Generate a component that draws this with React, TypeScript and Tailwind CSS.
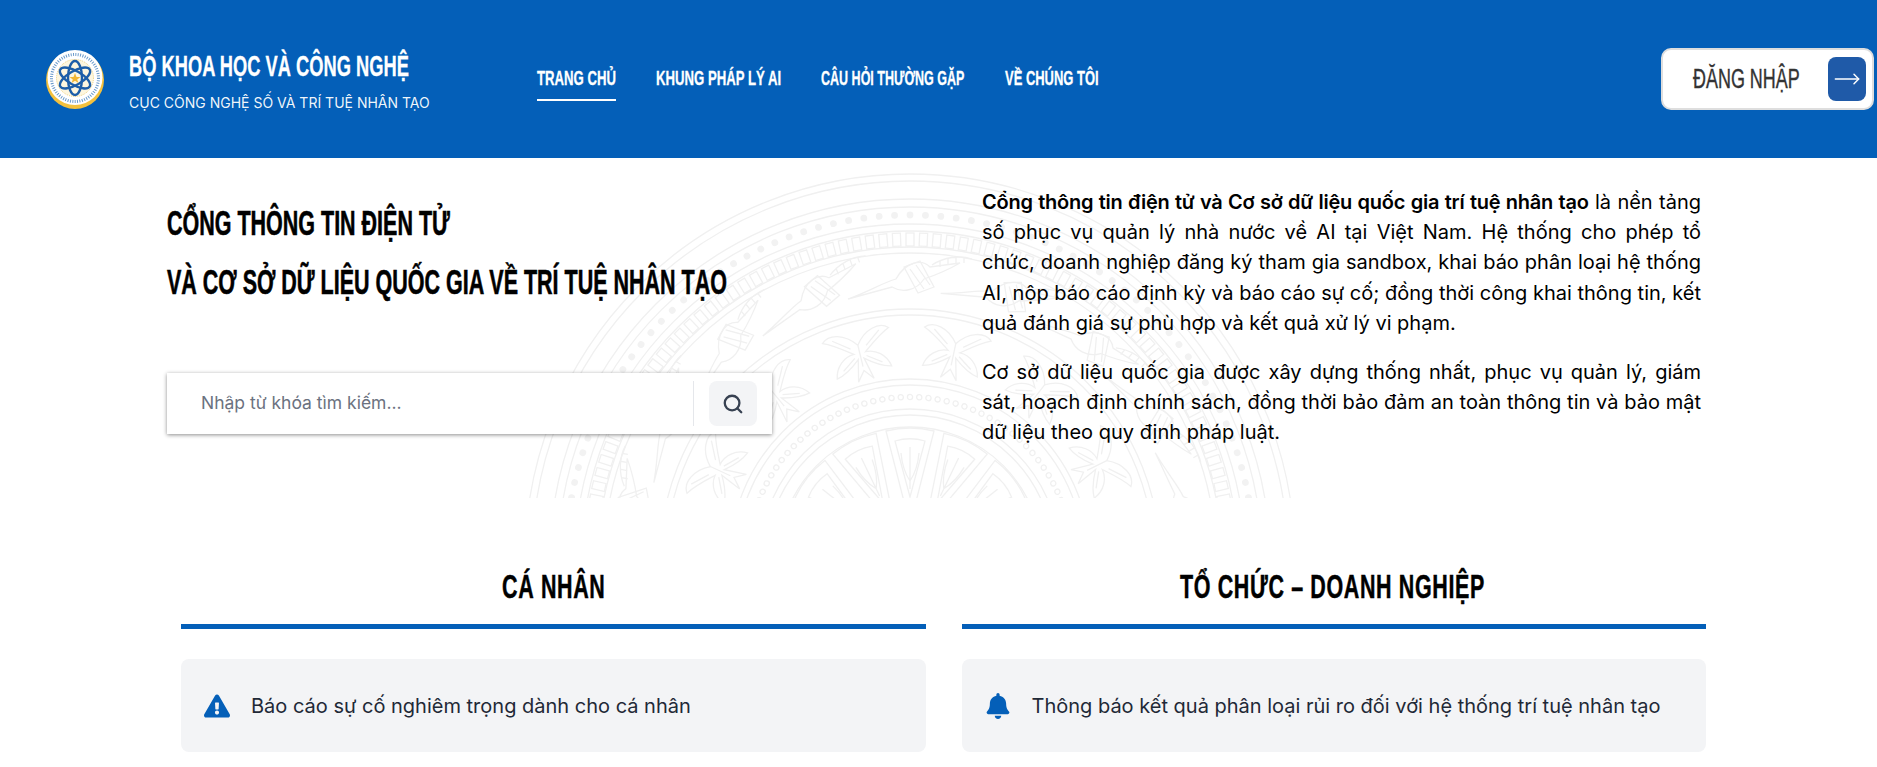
import { MoveRight, Search } from "lucide-react";
import { FaBell, FaExclamationTriangle } from "react-icons/fa";

const navItems = [
  { label: "TRANG CHỦ", width: "w-[79px]", scale: "scale-x-[0.626]", active: true },
  { label: "KHUNG PHÁP LÝ AI", width: "w-[125px]", scale: "scale-x-[0.627]", active: false },
  { label: "CÂU HỎI THƯỜNG GẶP", width: "w-[144px]", scale: "scale-x-[0.596]", active: false },
  { label: "VỀ CHÚNG TÔI", width: "w-[93px]", scale: "scale-x-[0.617]", active: false },
];

// trống đồng watermark, drawn from the center out
function Emblem() {
  const rings = [385, 378, 360, 352, 335, 328, 312, 306, 250, 244, 180, 174, 150, 144, 132];
  const ticks = Array.from({ length: 150 }, (_, i) => (i * 360) / 150);
  const dots = Array.from({ length: 140 }, (_, i) => (i * 360) / 140);
  const smallDots = Array.from({ length: 110 }, (_, i) => (i * 360) / 110);
  const rays = Array.from({ length: 14 }, (_, i) => (i * 360) / 14);
  const birds = Array.from({ length: 18 }, (_, i) => (i * 360) / 18);
  const figures = Array.from({ length: 14 }, (_, i) => (i * 360) / 14 + 12);
  return (
    <svg viewBox="-390 -390 780 780" className="absolute left-[520px] top-[11px] w-[780px] h-[780px]" fill="none" stroke="#f0f0f0" strokeWidth="1.3">
      {rings.map((r) => (
        <circle key={r} r={r} />
      ))}
      {dots.map((a) => (
        <circle key={a} r="3.4" cy="-344" transform={`rotate(${a})`} fill="#f2f2f2" stroke="none" />
      ))}
      {ticks.map((a) => (
        <rect key={a} x="-4" y="-326" width="8" height="13" transform={`rotate(${a})`} />
      ))}
      {smallDots.map((a) => (
        <circle key={a} r="2.6" cy="-162" transform={`rotate(${a})`} />
      ))}
      {birds.map((a) => (
        <g key={a} transform={`rotate(${a}) translate(0 -278)`}>
          <path d="M-62 18 C-40 10 -28 2 -14 -2 C-4 -20 12 -22 20 -14 L50 -18 C36 -10 26 -6 14 -2 C6 10 -8 12 -18 6 Z" />
          <path d="M-6 -14 L8 12 L24 6 L10 -20 Z M0 -12 L14 8 M6 -16 L20 4" />
          <path d="M22 -16 C34 -24 50 -26 62 -22 M30 -20 V-14 M38 -22 V-16 M46 -24 V-18 M54 -24 V-18" />
        </g>
      ))}
      {figures.map((a) => (
        <g key={a} transform={`rotate(${a}) translate(0 -212)`}>
          <path d="M0 -8 C-10 -22 -26 -26 -34 -18 C-24 -14 -14 -6 -6 0 C-16 0 -26 8 -28 20 C-18 18 -10 12 -3 6 L-8 28 L0 18 L8 28 L3 6 C10 12 18 18 28 20 C26 8 16 0 6 0 C14 -6 24 -14 34 -18 C26 -26 10 -22 0 -8 Z" />
          <path d="M-24 -18 L-8 -6 M24 -18 L8 -6 M-20 14 L-6 4 M20 14 L6 4 M0 -8 V14" />
        </g>
      ))}
      {rays.map((a) => (
        <g key={a} transform={`rotate(${a})`}>
          <path d="M-24 -128 C-8 -132 8 -132 24 -128 L0 -34 Z" />
          <path d="M-15 -118 C-5 -121 5 -121 15 -118 L0 -62 Z" />
          <path d="M0 -112 V-70 M-9 -106 C-8 -94 -4 -84 0 -78 C4 -84 8 -94 9 -106" />
        </g>
      ))}
    </svg>
  );
}

function Logo() {
  return (
    <svg viewBox="0 0 60 60" className="w-[60px] h-[60px]">
      <circle cx="30" cy="31" r="29" fill="#f4c13d" />
      <circle cx="30" cy="28.5" r="27.5" fill="#ffffff" />
      <circle cx="30" cy="29" r="18.5" fill="#fdf6df" stroke="#e9c45a" strokeWidth="0.8" strokeDasharray="1 1" />
      <g fill="none" stroke="#1d5ea8" strokeWidth="2.4">
        <ellipse cx="30" cy="29" rx="17" ry="7" transform="rotate(30 30 29)" />
        <ellipse cx="30" cy="29" rx="17" ry="7" transform="rotate(-30 30 29)" />
        <ellipse cx="30" cy="29" rx="17" ry="7" transform="rotate(90 30 29)" />
      </g>
      <polygon points="30,24 31.5,28 35.5,28 32.2,30.4 33.4,34 30,31.8 26.6,34 27.8,30.4 24.5,28 28.5,28" fill="#f2b632" />
      <circle cx="30" cy="29" r="23.5" fill="none" stroke="#2a6db3" strokeWidth="3" strokeDasharray="1 1.4" opacity="0.7" />
    </svg>
  );
}

function Condensed({ text, width, scale, className }: { text: string; width: string; scale: string; className: string }) {
  return (
    <span className={`${width} block`}>
      <span className={`${scale} ${className} block origin-left whitespace-nowrap font-['Liberation_Sans',sans-serif]`}>{text}</span>
    </span>
  );
}

function InfoColumn({ title, titleWidth, titleScale, text, icon }: { title: string; titleWidth: string; titleScale: string; text: string; icon: React.ReactNode }) {
  return (
    <section>
      <div className="flex justify-center h-[52px] items-center pt-[4px]">
        <Condensed text={title} width={titleWidth} scale={titleScale} className="font-bold text-[33px] leading-[40px] text-black tracking-[1px] [-webkit-text-stroke:0.5px_#000]" />
      </div>
      <div className="h-[5px] bg-[#045fb8] mt-[13px]" />
      <div className="flex items-center h-[93px] mt-[30px] rounded-lg bg-[#f3f4f6] px-[23px] gap-[21px]">
        {icon}
        <span className="text-[20px] text-[#1f2937]">{text}</span>
      </div>
    </section>
  );
}

export default function App() {
  return (
    <div className="h-[767px] overflow-hidden bg-white font-['Inter',sans-serif]">
      <header className="flex items-center h-[158px] bg-[#045fb8] text-white">
        <div className="ml-[45px]">
          <Logo />
        </div>
        <div className="ml-[24px] w-[308px] pt-[3px]">
          <Condensed text="BỘ KHOA HỌC VÀ CÔNG NGHỆ" width="w-[283px]" scale="scale-x-[0.631]" className="font-bold text-[29px] leading-[34px] [-webkit-text-stroke:0.3px_#fff]" />
          <p className="mt-[10px] text-[14px] leading-[20px] text-white/95">CỤC CÔNG NGHỆ SỐ VÀ TRÍ TUỆ NHÂN TẠO</p>
        </div>
        <nav className="flex ml-[100px] gap-[40px] pt-[7px]">
          {navItems.map((item) => (
            <a key={item.label} className={`block pb-[8px] border-b-2 ${item.active ? "border-white" : "border-transparent"}`}>
              <Condensed text={item.label} width={item.width} scale={item.scale} className="font-bold text-[21px] leading-[26px] [-webkit-text-stroke:0.3px_#fff]" />
            </a>
          ))}
        </nav>
        <button className="ml-auto mr-[3px] flex items-center justify-between w-[213px] h-[62px] rounded-[10px] bg-white border-2 border-[#dedede] pl-[30px] pr-[6px]">
          <Condensed text="ĐĂNG NHẬP" width="w-[107px]" scale="scale-x-[0.665]" className="font-normal text-[27px] leading-[28px] text-[#333333] text-left [-webkit-text-stroke:0.4px_#333333]" />
          <span className="flex items-center justify-center w-[38px] h-[44px] rounded-lg bg-[#1f5aa8]">
            <MoveRight size={28} strokeWidth={1.25} color="#ffffff" />
          </span>
        </button>
      </header>

      <section className="relative h-[340px] overflow-hidden">
        <Emblem />
        <div className="relative flex pl-[167px]">
          <div className="w-[815px]">
            <h1 className="pt-[35px]">
              <Condensed text="CỔNG THÔNG TIN ĐIỆN TỬ" width="w-[283px]" scale="scale-x-[0.614]" className="font-bold text-[35px] leading-[59px] text-black [-webkit-text-stroke:0.6px_#000]" />
              <Condensed text="VÀ CƠ SỞ DỮ LIỆU QUỐC GIA VỀ TRÍ TUỆ NHÂN TẠO" width="w-[558px]" scale="scale-x-[0.614]" className="font-bold text-[35px] leading-[59px] text-black [-webkit-text-stroke:0.6px_#000]" />
            </h1>
            <div className="flex items-center mt-[62px] w-[605px] h-[61px] bg-white shadow-[0_1px_4px_rgba(0,0,0,0.45)] pl-[34px] pr-[15px]">
              <span className="flex-1 text-[17.5px] text-[#6b7280]">Nhập từ khóa tìm kiếm...</span>
              <span className="w-px h-[45px] bg-[#e5e7eb] mr-[15px]" />
              <span className="flex items-center justify-center w-[48px] h-[45px] rounded-lg bg-[#f3f4f6]">
                <Search size={22} strokeWidth={2.5} color="#374151" />
              </span>
            </div>
          </div>
          <div className="w-[719px] pt-[29px] text-[20px] leading-[30.2px] text-black text-justify">
            <p>
              <strong className="font-semibold tracking-[-0.25px]">Cổng thông tin điện tử và Cơ sở dữ liệu quốc gia trí tuệ nhân tạo</strong> là nền tảng số phục vụ quản lý nhà nước về AI tại Việt Nam. Hệ thống cho phép tổ chức, doanh nghiệp đăng ký tham gia sandbox, khai báo phân loại hệ thống AI, nộp báo cáo định kỳ và báo cáo sự cố; đồng thời công khai thông tin, kết quả đánh giá sự phù hợp và kết quả xử lý vi phạm.
            </p>
            <p className="mt-[19px]">
              Cơ sở dữ liệu quốc gia được xây dựng thống nhất, phục vụ quản lý, giám sát, hoạch định chính sách, đồng thời bảo đảm an toàn thông tin và bảo mật dữ liệu theo quy định pháp luật.
            </p>
          </div>
        </div>
      </section>

      <main className="grid grid-cols-2 gap-[36px] ml-[181px] w-[1525px] pt-[61px]">
        <InfoColumn
          title="CÁ NHÂN"
          titleWidth="w-[103px]"
          titleScale="scale-x-[0.65]"
          text="Báo cáo sự cố nghiêm trọng dành cho cá nhân"
          icon={<FaExclamationTriangle size={26} color="#045fb8" />}
        />
        <InfoColumn
          title="TỔ CHỨC – DOANH NGHIỆP"
          titleWidth="w-[307px]"
          titleScale="scale-x-[0.65]"
          text="Thông báo kết quả phân loại rủi ro đối với hệ thống trí tuệ nhân tạo"
          icon={<FaBell size={26} color="#045fb8" />}
        />
      </main>
    </div>
  );
}
